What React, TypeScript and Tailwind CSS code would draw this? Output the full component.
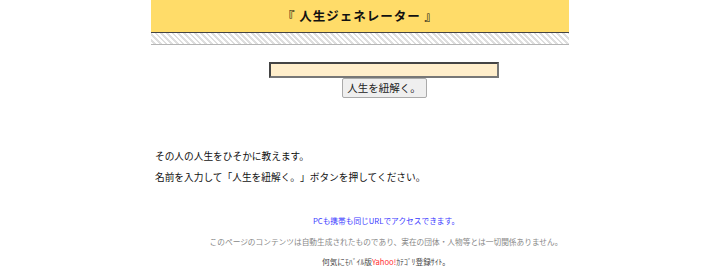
export default function App() {
  return (
    <div className="min-h-[275px] w-[720px] bg-white font-['Noto_Sans_CJK_JP',sans-serif] text-[#222] [text-spacing-trim:space-all]">
      <div className="ml-[151px] w-[418px]">
        <header className="flex h-[33px] items-center justify-center border-b border-[#444] bg-[#ffdc69]">
          <h1 className="text-[12.5px] font-bold tracking-[1px] text-[#111]">『 人生ジェネレーター 』</h1>
        </header>
        <div className="h-[12px] border-b border-[#b5b5b5] bg-[repeating-linear-gradient(45deg,#ffffff_0px,#ffffff_2px,#dedede_2px,#dedede_4px)]" />
      </div>

      <main className="ml-[151px]">
        <div className="mt-[17px] flex w-[466px] flex-col items-center">
          <input
            type="text"
            className="h-[16px] w-[230px] border-2 border-t-[#444] border-l-[#444] border-r-[#777] border-b-[#777] bg-[#ffeecb] outline-none"
          />
          <button className="h-[20px] w-[85px] rounded-[2px] border border-[#aaa] bg-[#efefef] text-[10.5px] leading-none text-[#222]">
            人生を紐解く。
          </button>
        </div>

        <div className="mt-[48px] pl-[4px] text-[9.7px] leading-[21px] text-[#111]">
          <p>その人の人生をひそかに教えます。</p>
          <p>名前を入力して「人生を紐解く。」ボタンを押してください。</p>
        </div>

        <footer className="mt-[23px] flex w-[470px] flex-col items-center text-[7.7px] leading-[20.5px]">
          <p className="text-[#3a3aff]">PCも携帯も同じURLでアクセスできます。</p>
          <p className="text-[#888]">このページのコンテンツは自動生成されたものであり、実在の団体・人物等とは一切関係ありません。</p>
          <p className="text-[#444]">
            何気にﾓﾊﾞｲﾙ版<span className="text-[#ff3333]">Yahoo!</span>ｶﾃｺﾞﾘ登録ｻｲﾄ。
          </p>
        </footer>
      </main>
    </div>
  )
}
